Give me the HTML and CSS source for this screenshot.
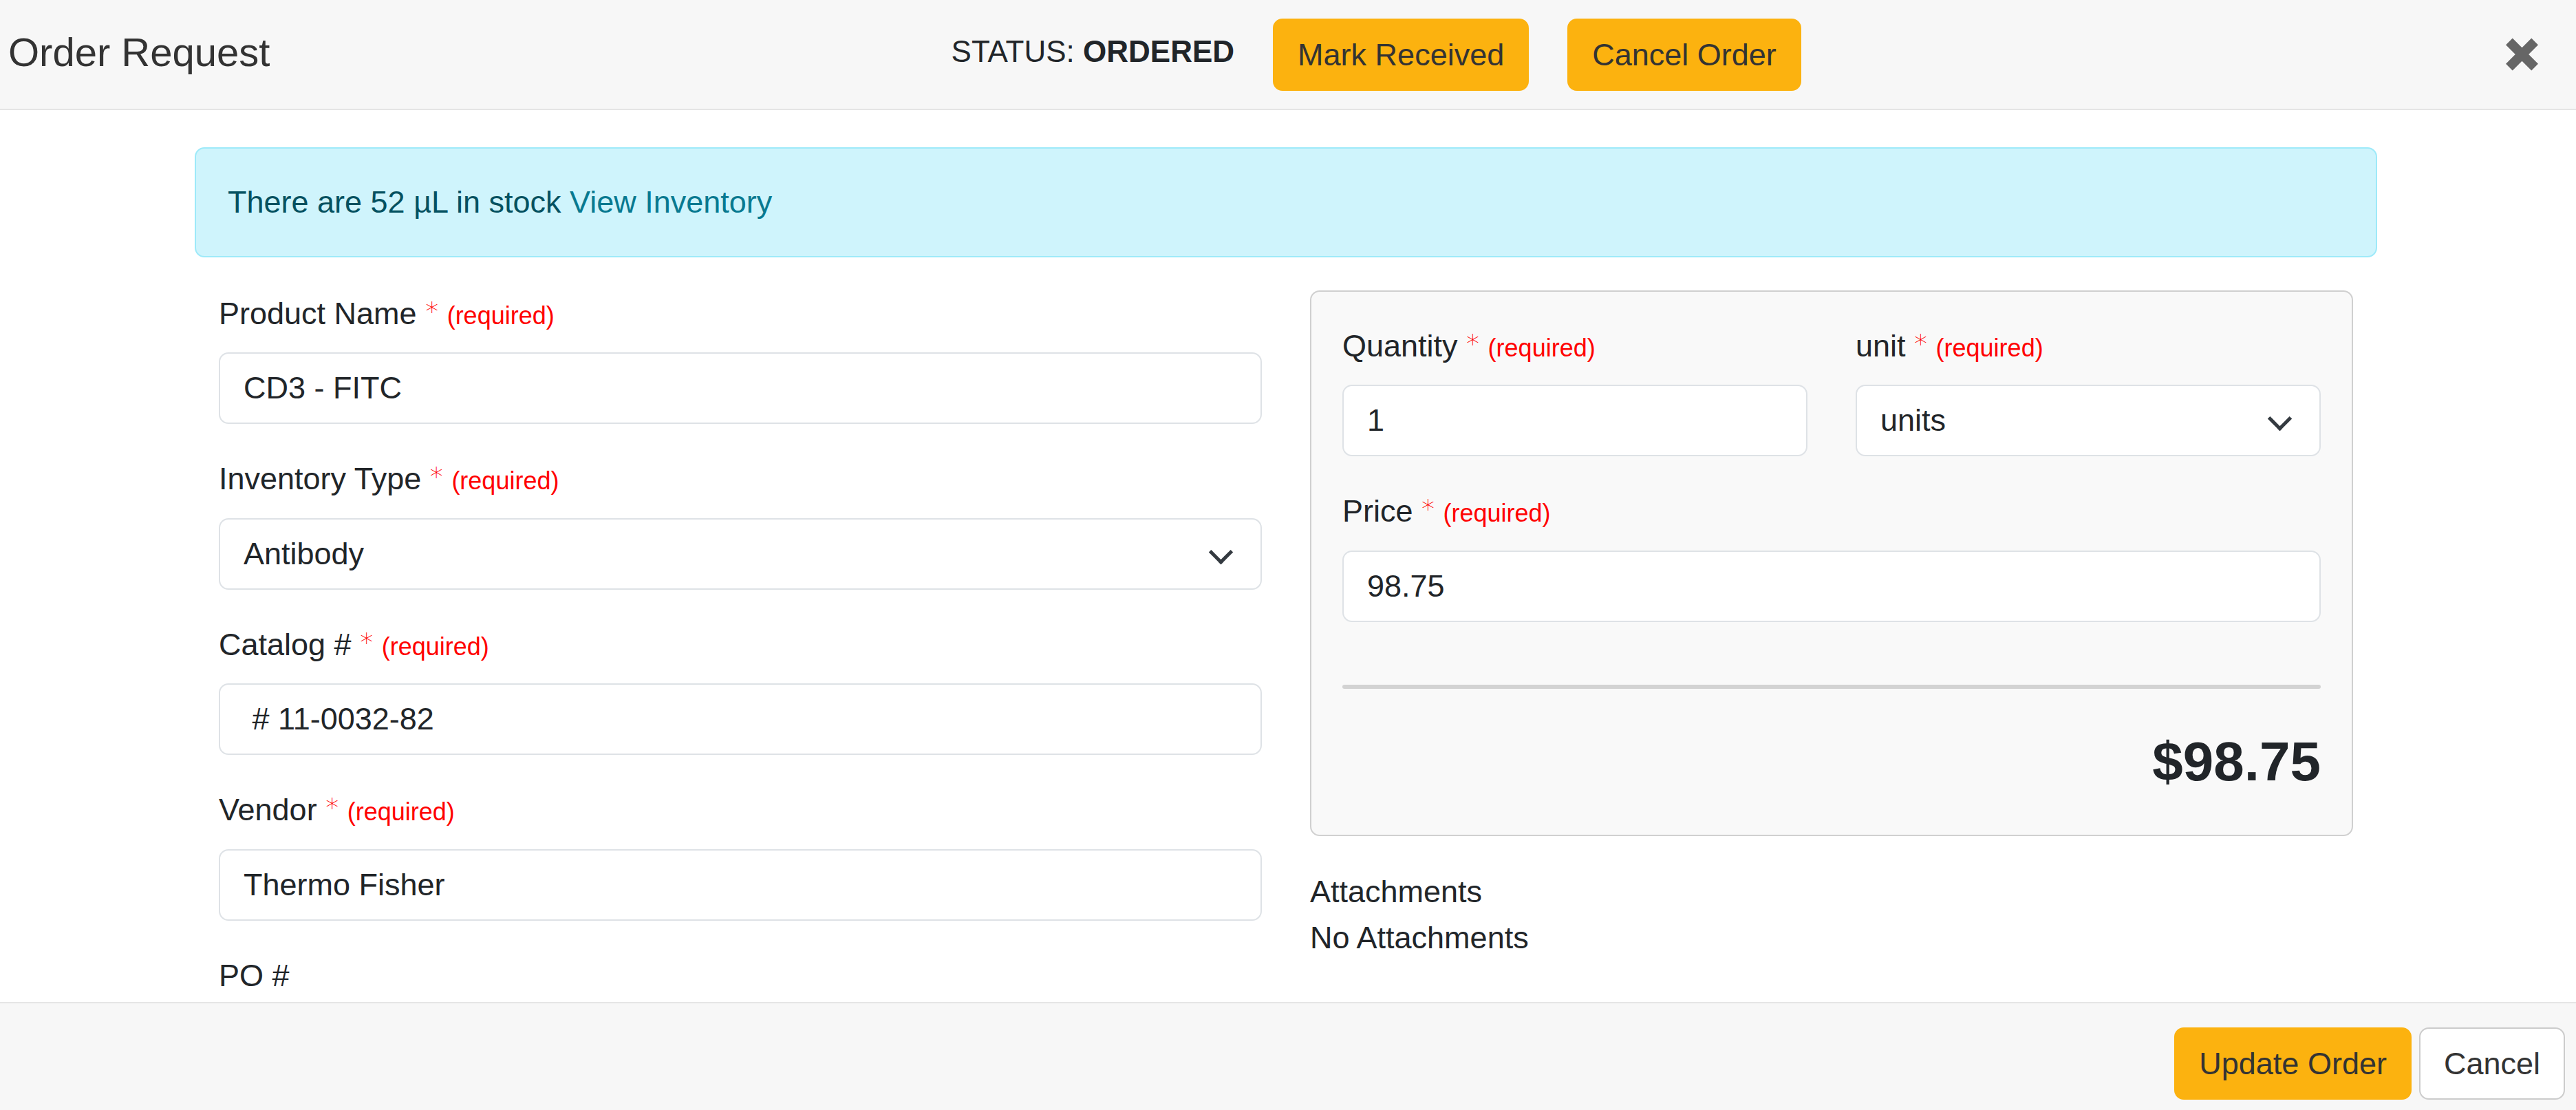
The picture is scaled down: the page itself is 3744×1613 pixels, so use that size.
FILE: index.html
```html
<!DOCTYPE html>
<html lang="en">
<head>
  <meta charset="UTF-8" />
  <title>Order Request</title>
  <link rel="stylesheet" href="styles.css">
</head>
<body>
  <div class="modal">
    <!-- HEADER -->
    <header class="modal-header">
      <h1>Order Request</h1>
      <div class="status-bar">
        <span class="status">STATUS: <b>ORDERED</b></span>
        <button class="btn btn-amber">Mark Received</button>
        <button class="btn btn-amber">Cancel Order</button>
      </div>
      <button class="close" aria-label="Close">
        <svg viewBox="0 0 48 48" width="47" height="48">
          <path d="M5 5L43 43M43 5L5 43" stroke="#666" stroke-width="14" />
        </svg>
      </button>
    </header>

    <!-- BODY -->
    <main class="modal-body">
      <div class="container">
        <div class="alert">There are 52 µL in stock <a href="#">View Inventory</a></div>

        <div class="row">
          <div class="col">
            <div class="field">
              <label>Product Name <span class="star">*</span> <span class="req">(required)</span></label>
              <input type="text" value="CD3 - FITC" />
            </div>
            <div class="field">
              <label>Inventory Type <span class="star">*</span> <span class="req">(required)</span></label>
              <div class="select">
                <select>
                  <option>Antibody</option>
                </select>
              </div>
            </div>
            <div class="field">
              <label>Catalog # <span class="star">*</span> <span class="req">(required)</span></label>
              <input type="text" value=" # 11-0032-82" />
            </div>
            <div class="field">
              <label>Vendor <span class="star">*</span> <span class="req">(required)</span></label>
              <input type="text" value="Thermo Fisher" />
            </div>
            <div class="field">
              <label>PO #</label>
              <input type="text" value="" />
            </div>
          </div>

          <div class="col">
            <div class="panel">
              <div class="pair">
                <div class="field">
                  <label>Quantity <span class="star">*</span> <span class="req">(required)</span></label>
                  <input type="text" value="1" />
                </div>
                <div class="field">
                  <label>unit <span class="star">*</span> <span class="req">(required)</span></label>
                  <div class="select">
                    <select>
                      <option>units</option>
                    </select>
                  </div>
                </div>
              </div>
              <div class="field">
                <label>Price <span class="star">*</span> <span class="req">(required)</span></label>
                <input type="text" value="98.75" />
              </div>
              <hr />
              <div class="total">$98.75</div>
            </div>

            <div class="attachments">
              <div>Attachments</div>
              <div>No Attachments</div>
            </div>
          </div>
        </div>
      </div>
    </main>

    <!-- FOOTER -->
    <footer class="modal-footer">
      <button class="btn btn-amber">Update Order</button>
      <button class="btn btn-light">Cancel</button>
    </footer>
  </div>
</body>
</html>
```

FILE: styles.css
```css
* {
  box-sizing: border-box;
}
html,
body {
  margin: 0;
}
body {
  font-family: "Liberation Sans", Arial, sans-serif;
  font-size: 45px;
  line-height: 1.5;
  color: #212529;
  background: #fff;
}
.modal {
  display: flex;
  flex-direction: column;
  height: 1613px;
  overflow: hidden;
}

/* HEADER */
.modal-header {
  flex: none;
  height: 160px;
  display: flex;
  align-items: center;
  justify-content: space-between;
  padding: 0 55px 0 12px;
  background: #f7f7f7;
  border-bottom: 2px solid #e5e5e5;
}
.modal-header h1 {
  margin: 0 0 6px;
  font-size: 58px;
  font-weight: 400;
  line-height: 1.15;
  color: #333;
}
.status-bar {
  display: flex;
  align-items: center;
  gap: 56px;
  margin-right: 34px;
}
.status {
  font-size: 44px;
  margin-bottom: 8px;
}
.close {
  display: flex;
  padding: 0;
  border: 0;
  background: none;
  cursor: pointer;
}

/* BUTTONS */
.btn {
  height: 105px;
  padding: 0 34px;
  font: inherit;
  line-height: 1;
  color: #333;
  border: 2px solid transparent;
  border-radius: 14px;
  cursor: pointer;
}
.btn-amber {
  background: #fcb20f;
  border-color: #fcb20f;
}
.btn-light {
  background: #fff;
  border-color: #ccc;
}

/* BODY */
.modal-body {
  flex: 1;
  overflow: hidden;
  padding-top: 54px;
}
.container {
  width: 3172px;
  margin-left: 283px;
}
.alert {
  padding: 44px 46px;
  margin-bottom: 48px;
  background: #cff4fc;
  border: 2px solid #9eeaf9;
  border-radius: 14px;
  color: #055160;
}
.alert a {
  color: #087990;
  text-decoration: none;
}
.row {
  display: grid;
  grid-template-columns: 1fr 1fr;
}
.col {
  padding: 0 35px;
}

/* FORM */
.field {
  margin-bottom: 46px;
}
.field label {
  display: block;
  margin-bottom: 23px;
}
.star {
  font-family: "DejaVu Sans", sans-serif;
  font-size: 38px;
  font-weight: 200;
  vertical-align: 5px;
  color: red;
}
.req {
  font-size: 36px;
  color: red;
}
.field input,
.field select {
  display: block;
  width: 100%;
  height: 104px;
  padding: 0 34px;
  font: inherit;
  color: #212529;
  background: #fff;
  border: 2px solid #dee2e6;
  border-radius: 14px;
  appearance: none;
  outline: none;
}
.select {
  position: relative;
}
.select::after {
  content: "";
  position: absolute;
  right: 47px;
  top: calc(50% - 15px);
  width: 20px;
  height: 20px;
  border-right: 5px solid #343a40;
  border-bottom: 5px solid #343a40;
  transform: rotate(45deg);
}

/* PRICE PANEL */
.panel {
  padding: 45px;
  margin-bottom: 47px;
  background: #f9f9f9;
  border: 2px solid #d0d0d0;
  border-radius: 14px;
}
.pair {
  display: grid;
  grid-template-columns: 1fr 1fr;
  gap: 70px;
}
.panel hr {
  height: 6px;
  margin: 91px 0 0;
  border: 0;
  border-radius: 3px;
  background: #d3d3d3;
}
.total {
  margin: 58px 0 13px;
  font-size: 80px;
  font-weight: 700;
  line-height: 96px;
  text-align: right;
}

/* FOOTER */
.modal-footer {
  flex: none;
  height: 157px;
  display: flex;
  justify-content: flex-end;
  align-items: flex-start;
  gap: 11px;
  padding: 35px 16px 0 0;
  background: #f7f7f7;
  border-top: 2px solid #e5e5e5;
}
```
